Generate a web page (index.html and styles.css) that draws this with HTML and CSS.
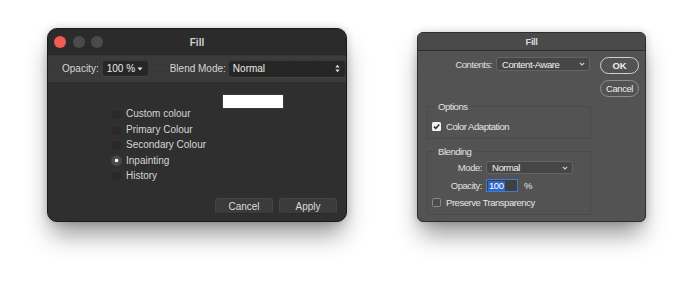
FILE: index.html
```html
<!DOCTYPE html>
<html>
<head>
<meta charset="utf-8">
<link rel="stylesheet" href="styles.css">
</head>
<body>
<div class="stage">
  <div class="mac">
    <div class="mac-title">
      <div class="lights">
        <span class="light red"></span>
        <span class="light"></span>
        <span class="light"></span>
      </div>
      <div class="mac-title-text">Fill</div>
      <div></div>
    </div>
    <div class="mac-toolbar">
      <span class="tlabel">Opacity:</span>
      <div class="mdrop small">
        <span>100 %</span>
        <svg width="6" height="4" viewBox="0 0 6 4"><path d="M0.5 0.5h5L3 3.6z" fill="#e6e6e6"/></svg>
      </div>
      <span class="tlabel blend">Blend Mode:</span>
      <div class="mdrop wide">
        <span>Normal</span>
        <svg width="5" height="9" viewBox="0 0 5 9"><path d="M0.3 3.4h4.4L2.5 0.8z M0.3 5.6h4.4L2.5 8.2z" fill="#dcdcdc"/></svg>
      </div>
    </div>
    <div class="mac-body">
      <div class="choices">
        <div class="radios">
          <div class="radio-row"><span class="radio"></span>Custom colour</div>
          <div class="radio-row"><span class="radio"></span>Primary Colour</div>
          <div class="radio-row"><span class="radio"></span>Secondary Colour</div>
          <div class="radio-row"><span class="radio on"></span>Inpainting</div>
          <div class="radio-row"><span class="radio"></span>History</div>
        </div>
        <div class="swatch"></div>
      </div>
      <div class="mac-buttons">
        <div class="mbtn">Cancel</div>
        <div class="mbtn">Apply</div>
      </div>
    </div>
  </div>

  <div class="ps">
    <div class="ps-title">Fill</div>
    <div class="ps-body">
      <div class="ps-form">
        <div class="ps-row top">
          <span class="ps-label">Contents:</span>
          <div class="ps-drop contents">
            <span>Content-Aware</span>
            <svg width="6" height="4" viewBox="0 0 6 4"><path d="M0.8 0.8L3 3L5.2 0.8" stroke="#d0d0d0" stroke-width="1.1" fill="none"/></svg>
          </div>
        </div>
        <fieldset class="group options">
          <legend>Options</legend>
          <div class="check-row">
            <span class="check on"><svg width="9" height="9" viewBox="0 0 9 9"><rect x="0" y="0" width="9" height="9" rx="1.5" fill="#f2f2f2"/><path d="M2 4.6L3.8 6.4L7.2 2.4" stroke="#2b2b2b" stroke-width="1.6" fill="none"/></svg></span>
            <span>Color Adaptation</span>
          </div>
        </fieldset>
        <fieldset class="group blending">
          <legend>Blending</legend>
          <div class="ps-row">
            <span class="ps-label inner">Mode:</span>
            <div class="ps-drop mode">
              <span>Normal</span>
              <svg width="6" height="4" viewBox="0 0 6 4"><path d="M0.8 0.8L3 3L5.2 0.8" stroke="#d0d0d0" stroke-width="1.1" fill="none"/></svg>
            </div>
          </div>
          <div class="ps-row op">
            <span class="ps-label inner">Opacity:</span>
            <div class="ps-input"><span class="sel">100</span></div>
            <span class="pct">%</span>
          </div>
          <div class="check-row preserve">
            <span class="check"></span>
            <span>Preserve Transparency</span>
          </div>
        </fieldset>
      </div>
      <div class="ps-buttons">
        <div class="pbtn ok">OK</div>
        <div class="pbtn">Cancel</div>
      </div>
    </div>
  </div>
</div>
</body>
</html>
```

FILE: styles.css
```css
* { box-sizing: border-box; }
html, body { margin: 0; padding: 0; background: #ffffff; }
body { width: 700px; height: 287px; overflow: hidden; font-family: "Liberation Sans", Arial, sans-serif; }

.stage {
  display: flex;
  align-items: flex-start;
  padding: 28px 0 0 47px;
  gap: 70px;
}

/* ---------- Left: macOS style dialog ---------- */
.mac {
  width: 300px;
  height: 194px;
  border-radius: 10px;
  background: #2f2f2f;
  border: 1px solid #1a1a1a;
  box-shadow: 0 16px 24px -4px rgba(0,0,0,0.42), 0 0 9px rgba(0,0,0,0.18), inset 0 1px 0 #4a4a4a;
  display: flex;
  flex-direction: column;
  overflow: hidden;
  color: #d9d9d9;
  font-size: 10px;
}
.mac-title {
  height: 26px;
  display: grid;
  grid-template-columns: 1fr auto 1fr;
  align-items: center;
  background: #2b2b2b;
}
.lights { display: flex; gap: 6.5px; padding-left: 6px; }
.light { width: 12px; height: 12px; border-radius: 50%; background: #4a4a4a; }
.light.red { background: #ee5c54; }
.mac-title-text { font-weight: bold; font-size: 10px; color: #cfcfcf; }

.mac-toolbar {
  height: 27px;
  background-color: #3a3a3a;
  background-image: radial-gradient(rgba(255,255,255,0.035) 0.6px, transparent 0.8px), radial-gradient(rgba(0,0,0,0.08) 0.6px, transparent 0.8px);
  background-size: 3px 3px, 4px 5px;
  background-position: 1px 1px, 2px 3px;
  display: flex;
  align-items: center;
  padding-left: 14px;
}
.tlabel { color: #d6d6d6; margin-right: 4px; }
.tlabel.blend { margin-left: 22px; margin-right: 3px; }
.mdrop {
  height: 15px;
  background: #262626;
  border-radius: 3px;
  display: flex;
  align-items: center;
  justify-content: space-between;
  padding: 0 5px 0 4px;
  color: #ececec;
  box-shadow: 0 1px 0 rgba(255,255,255,0.06);
}
.mdrop.small { width: 45px; }
.mdrop.wide { width: 116px; height: 16px; }

.mac-body {
  flex: 1;
  display: flex;
  flex-direction: column;
}
.choices {
  display: grid;
  grid-template-columns: 111px auto;
  padding: 24px 0 0 63px;
  align-items: start;
}
.radio-row {
  height: 15.5px;
  display: flex;
  align-items: center;
  gap: 4px;
  color: #d6d6d6;
}
.radio {
  width: 11px;
  height: 11px;
  border-radius: 50%;
  background: #292929;
  box-shadow: inset 0 1px 0 #3a3a3a;
}
.radio.on {
  background: #4a4a4a radial-gradient(circle, #f4f4f4 0 1.6px, transparent 2.1px);
}
.swatch {
  width: 62px;
  height: 15px;
  background: #ffffff;
  margin-top: -12px;
  border: 1px solid #3a3a3a;
}
.mac-buttons {
  margin-top: auto;
  display: flex;
  justify-content: flex-end;
  gap: 6px;
  padding: 0 9px 7px 0;
}
.mbtn {
  width: 58px;
  height: 16px;
  border-radius: 3px;
  background: #3b3b3b;
  border: 1px solid #444;
  border-bottom-color: #2a2a2a;
  display: flex;
  align-items: center;
  justify-content: center;
  color: #dcdcdc;
  font-size: 10px;
}

/* ---------- Right: Photoshop style dialog ---------- */
.ps {
  margin-top: 4px;
  width: 229px;
  height: 190px;
  border-radius: 6px;
  background: #535353;
  border: 1px solid #2e2e2e;
  box-shadow: 0 16px 24px -4px rgba(0,0,0,0.42), 0 0 9px rgba(0,0,0,0.18);
  overflow: hidden;
  color: #e6e6e6;
  font-family: "Liberation Sans", Arial, sans-serif;
  font-size: 9.5px;
  letter-spacing: -0.45px;
  display: flex;
  flex-direction: column;
}
.ps-title {
  height: 18px;
  background: #4a4a4a;
  border-bottom: 1px solid #2c2c2c;
  text-align: center;
  line-height: 17px;
  font-size: 9.5px;
  font-weight: bold;
  color: #d6d6d6;
}
.ps-body {
  display: flex;
  padding: 6px 0 0 9px;
}
.ps-form { width: 164px; display: flex; flex-direction: column; }
.ps-row { display: flex; align-items: center; }
.ps-row.top { height: 14px; margin-bottom: 30px; }
.ps-label { width: 65px; text-align: right; margin-right: 4px; color: #e0e0e0; }
.ps-label.inner { width: 54px; }
.ps-drop {
  height: 14px;
  background: #464646;
  border: 1px solid #646464;
  border-radius: 3px;
  display: flex;
  align-items: center;
  justify-content: space-between;
  padding: 0 4px 0 5px;
  color: #f0f0f0;
}
.ps-drop.contents { width: 94px; }
.ps-drop.mode { width: 87px; height: 13px; }

.group {
  margin: 0;
  padding: 0;
  border: 1px solid #4a4a4a;
  min-width: 0;
}
.group legend {
  padding: 0 3px;
  margin-left: 7px;
  font-size: 9.5px;
  line-height: 11px;
  color: #e4e4e4;
}
.group.options { height: 38px; }
.group.blending { margin-top: 7px; height: 69px; padding-top: 4px; }

.check-row { display: flex; align-items: center; gap: 5px; padding-left: 4px; }
.options .check-row { margin-top: 9px; }
.check { width: 9px; height: 9px; display: block; border-radius: 1.5px; }
.check svg { display: block; }
.check:not(.on) { background: #4c4c4c; border: 1px solid #8a8a8a; }

.ps-row.op { margin-top: 5px; }
.ps-input {
  width: 32px;
  height: 13px;
  border: 1px solid #3d7bd9;
  background: #404040;
  display: flex;
  align-items: center;
  padding-left: 1px;
}
.sel { background: #2f67c9; color: #ffffff; padding: 0 1px; line-height: 10px; }
.pct { margin-left: 6px; }
.preserve { margin-top: 5px; }

.ps-buttons {
  margin-left: 9px;
  display: flex;
  flex-direction: column;
  gap: 6px;
}
.pbtn {
  width: 39px;
  height: 17px;
  border-radius: 9px;
  border: 1px solid #8e8e8e;
  display: flex;
  align-items: center;
  justify-content: center;
  color: #ececec;
  font-size: 9.5px;
}
.pbtn.ok { border: 1.5px solid #d0d0d0; font-weight: bold; font-size: 9.5px; letter-spacing: 0; }
```
